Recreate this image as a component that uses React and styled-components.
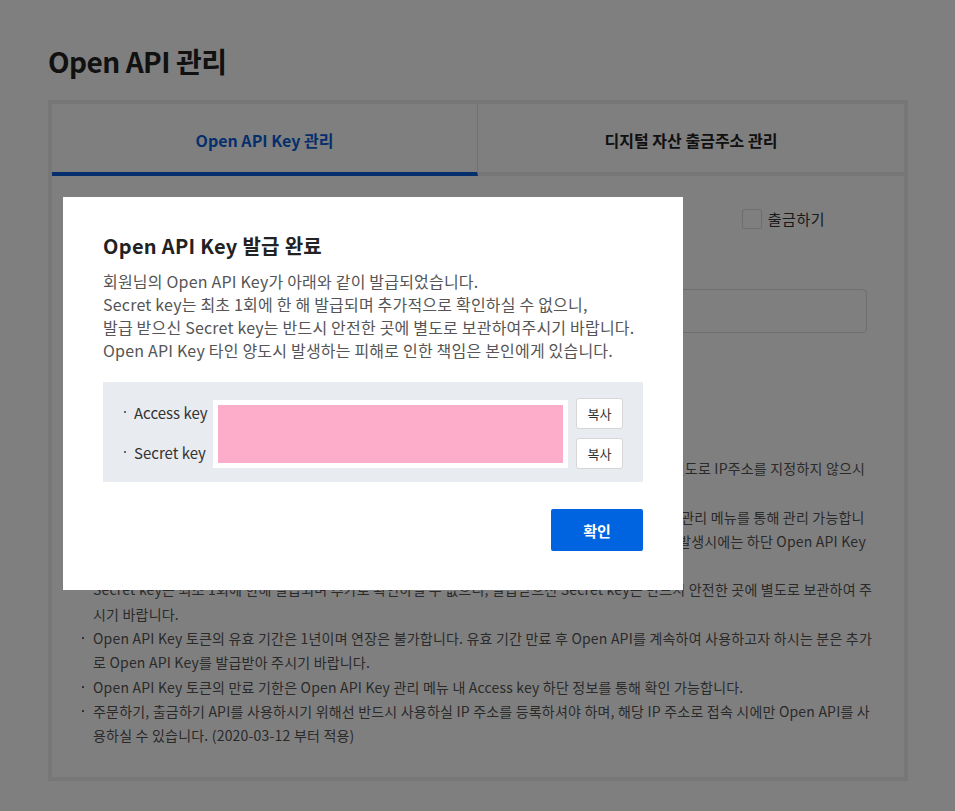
import React from 'react';
import styled, { createGlobalStyle } from 'styled-components';

const GlobalStyle = createGlobalStyle`
  body {
    margin: 0;
    background: #fff;
    font-family: "Noto Sans CJK KR", "Noto Sans", sans-serif;
    color: #333;
  }
  * { box-sizing: border-box; }
`;

const permissions = ['자산조회', '주문조회', '주문하기', '출금조회', '출금하기'];

const notices = [
  '허용할 IP 주소는 최대 10개까지 등록하실 수 있으며, 콤마(,)로 구분하여 입력하여 주시기 바랍니다. 별도로 IP주소를 지정하지 않으시면 자산조회, 주문조회 기능만 이용 가능합니다.',
  '발급받으신 Open API Key는 각 Key별로 허용 IP 및 권한 설정의 변경이 불가능하며, Open API Key 관리 메뉴를 통해 관리 가능합니다. Open API Key의 분실 또는 외부 유출 등의 사유로 인하여 보안 문제가 발생하거나 이상거래 문제 발생시에는 하단 Open API Key 삭제 버튼을 통해 삭제 후 재발급 받으시기 바랍니다.',
  'Secret key는 최초 1회에 한해 발급되며 추가로 확인하실 수 없으니, 발급받으신 Secret key는 반드시 안전한 곳에 별도로 보관하여 주시기 바랍니다.',
  'Open API Key 토큰의 유효 기간은 1년이며 연장은 불가합니다. 유효 기간 만료 후 Open API를 계속하여 사용하고자 하시는 분은 추가로 Open API Key를 발급받아 주시기 바랍니다.',
  'Open API Key 토큰의 만료 기한은 Open API Key 관리 메뉴 내 Access key 하단 정보를 통해 확인 가능합니다.',
  '주문하기, 출금하기 API를 사용하시기 위해선 반드시 사용하실 IP 주소를 등록하셔야 하며, 해당 IP 주소로 접속 시에만 Open API를 사용하실 수 있습니다. (2020-03-12 부터 적용)',
];

const App = () => {
  return (
    <>
      <GlobalStyle />
      <Page>
        <Title>Open API 관리</Title>
        <Card>
          <Tabs>
            <Tab active>Open API Key 관리</Tab>
            <Tab>디지털 자산 출금주소 관리</Tab>
          </Tabs>

          <Content>
            <PermRow>
              <FieldLabel>권한 설정</FieldLabel>
              <Options>
                {permissions.map((p) => (
                  <Option key={p}>
                    <Check />
                    {p}
                  </Option>
                ))}
              </Options>
            </PermRow>

            <IpLabel>허용 IP 주소</IpLabel>
            <InputWrap>
              <IpInput placeholder="IP 주소를 입력해 주세요." readOnly />
            </InputWrap>

            <IssueButton>Open API Key 발급받기</IssueButton>

            <NoticeTitle>Open API 이용 안내</NoticeTitle>
            <NoticeList>
              {notices.map((n, i) => (
                <NoticeItem key={i}>
                  <Dot />
                  <span>{n}</span>
                </NoticeItem>
              ))}
            </NoticeList>
          </Content>
        </Card>
      </Page>

      <Overlay />
      <Modal>
        <ModalTitle>Open API Key 발급 완료</ModalTitle>
        <Desc>
          회원님의 Open API Key가 아래와 같이 발급되었습니다.
          <br />
          Secret key는 최초 1회에 한 해 발급되며 추가적으로 확인하실 수 없으니,
          <br />
          발급 받으신 Secret key는 반드시 안전한 곳에 별도로 보관하여주시기 바랍니다.
          <br />
          Open API Key 타인 양도시 발생하는 피해로 인한 책임은 본인에게 있습니다.
        </Desc>

        <KeyBox>
          <KeyLabel row={1}>
            <Dot small />
            Access key
          </KeyLabel>
          <KeyLabel row={2}>
            <Dot small />
            Secret key
          </KeyLabel>
          <KeyFrame>
            <KeyMask />
          </KeyFrame>
          <CopyButton row={1}>복사</CopyButton>
          <CopyButton row={2}>복사</CopyButton>
        </KeyBox>

        <Footer>
          <ConfirmButton>확인</ConfirmButton>
        </Footer>
      </Modal>
    </>
  );
};

export default App;

const Page = styled.div`
  padding: 41px 47px 30px 48px;
`;

const Title = styled.h1`
  margin: 0 0 19px;
  font-size: 28px;
  line-height: 40px;
  font-weight: 700;
  letter-spacing: -0.5px;
  color: #222;
`;

const Card = styled.section`
  width: 860px;
  border: 4px solid #eee;
`;

const Tabs = styled.div`
  display: grid;
  grid-template-columns: 1fr 1fr;
`;

const Tab = styled.div`
  height: 72px;
  display: flex;
  align-items: center;
  justify-content: center;
  font-size: 16px;
  font-weight: 700;
  color: ${({ active }) => (active ? '#0a5fd8' : '#222')};
  border-bottom: 4px solid ${({ active }) => (active ? '#0a5fd8' : '#eee')};
  border-right: ${({ active }) => (active ? '1px solid #e2e2e2' : 'none')};
  padding-top: 4px;
`;

const Content = styled.div`
  padding: 33px 30px 29px 30px;
`;

const PermRow = styled.div`
  display: flex;
  align-items: center;
  height: 20px;
`;

const FieldLabel = styled.div`
  font-size: 15px;
  font-weight: 700;
  color: #222;
`;

const Options = styled.div`
  margin-left: auto;
  padding-right: 49px;
  display: flex;
  gap: 64px;
`;

const Option = styled.label`
  display: flex;
  align-items: center;
  gap: 6px;
  font-size: 15px;
  line-height: 20px;
  letter-spacing: 0.5px;
  color: #333;
`;

const Check = styled.span`
  width: 20px;
  height: 20px;
  border: 1px solid #ddd;
  border-radius: 2px;
  background: #fff;
`;

const IpLabel = styled.div`
  margin-top: 26px;
  font-size: 15px;
  line-height: 22px;
  font-weight: 700;
  color: #222;
`;

const InputWrap = styled.div`
  margin-top: 12px;
  padding-right: 7px;
`;

const IpInput = styled.input`
  display: block;
  width: 100%;
  height: 44px;
  border: 1px solid #ddd;
  border-radius: 4px;
  padding: 0 14px;
  font: 14px "Noto Sans CJK KR", sans-serif;
  color: #333;
  outline: none;
`;

const IssueButton = styled.button`
  display: block;
  margin: 28px auto 0;
  width: 200px;
  height: 40px;
  border: 0;
  border-radius: 2px;
  background: #0a5fd8;
  color: #fff;
  font: 700 15px "Noto Sans CJK KR", sans-serif;
`;

const NoticeTitle = styled.div`
  margin-top: 31px;
  font-size: 15px;
  line-height: 24px;
  font-weight: 700;
  color: #222;
`;

const NoticeList = styled.ul`
  margin: 0;
  padding: 0;
  list-style: none;
  font-size: 14px;
  line-height: 24.3px;
  letter-spacing: 0.2px;
  color: #555;
`;

const NoticeItem = styled.li`
  display: flex;
  align-items: flex-start;
`;

const Dot = styled.span`
  flex: none;
  width: 2px;
  height: 2px;
  background: #666;
  margin: ${({ small }) => (small ? '0 8px 0 0' : '11px 9px 0 0')};
`;

const Overlay = styled.div`
  position: fixed;
  inset: 0;
  background: rgba(0, 0, 0, 0.5);
`;

const Modal = styled.div`
  position: fixed;
  top: 197px;
  left: 63px;
  width: 620px;
  padding: 35px 40px 39px;
  background: #fff;
`;

const ModalTitle = styled.h2`
  margin: 0 0 10px;
  font-size: 20px;
  line-height: 28px;
  font-weight: 700;
  letter-spacing: 0.3px;
  color: #222;
`;

const Desc = styled.p`
  margin: 0 0 20px;
  font-size: 16px;
  line-height: 23px;
  letter-spacing: 0.2px;
  color: #555;
`;

const KeyBox = styled.div`
  display: grid;
  grid-template-columns: 89px 1fr 55px;
  grid-template-rows: 31px 31px;
  row-gap: 9px;
  padding: 16px 20px 13px 21px;
  background: #e8ebf0;
`;

const KeyLabel = styled.div`
  grid-column: 1;
  grid-row: ${({ row }) => row};
  display: flex;
  align-items: center;
  padding-bottom: 3px;
  font-size: 15px;
  color: #333;
`;

const KeyFrame = styled.div`
  grid-column: 2;
  grid-row: 1 / span 2;
  align-self: center;
  height: 68px;
  padding: 5px;
  background: #fff;
`;

const KeyMask = styled.div`
  height: 100%;
  background: #fdadc9;
`;

const CopyButton = styled.button`
  grid-column: 3;
  grid-row: ${({ row }) => row};
  justify-self: end;
  width: 47px;
  height: 31px;
  padding: 0;
  border: 1px solid #d6d6d6;
  border-radius: 3px;
  background: #fff;
  font: 13px "Noto Sans CJK KR", sans-serif;
  color: #333;
`;

const Footer = styled.div`
  margin-top: 27px;
  display: flex;
  justify-content: flex-end;
`;

const ConfirmButton = styled.button`
  width: 92px;
  height: 42px;
  border: 0;
  border-radius: 2px;
  background: #0063e0;
  color: #fff;
  font: 700 15px "Noto Sans CJK KR", sans-serif;
`;
